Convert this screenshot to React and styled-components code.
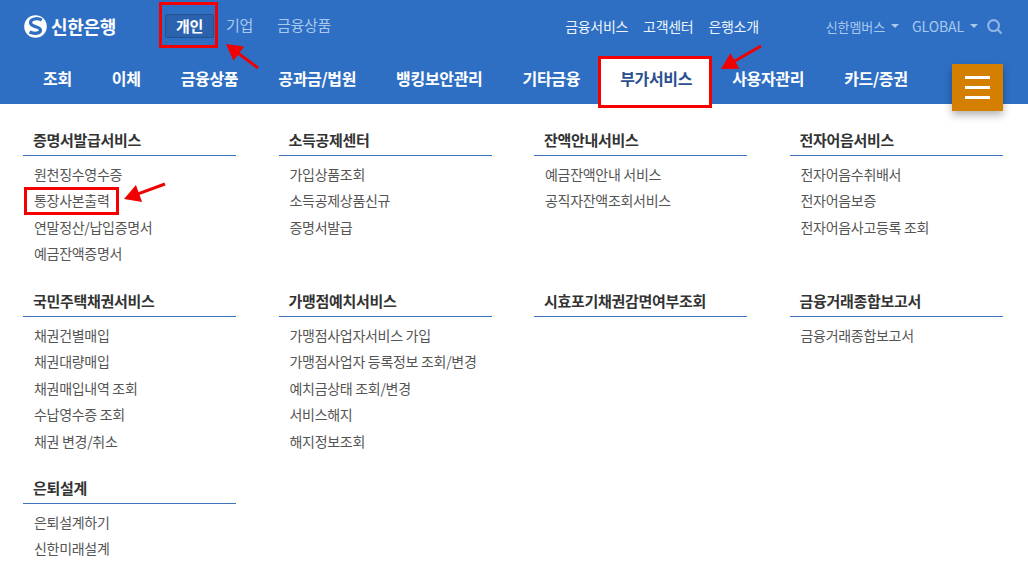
import React from "react";
import styled, { createGlobalStyle } from "styled-components";

const FONT = `"Noto Sans CJK KR", "Noto Sans", sans-serif`;

const GlobalStyle = createGlobalStyle`
  html, body {
    margin: 0;
    padding: 0;
    background: #fff;
    font-family: ${FONT};
  }
`;

const Page = styled.div`
  position: relative;
  width: 1028px;
  height: 579px;
  overflow: hidden;
`;

const Header = styled.header`
  height: 104px;
  background: #2e6fc4;
  display: flex;
  flex-direction: column;
`;

const TopBar = styled.div`
  height: 52px;
  display: flex;
  align-items: center;
  padding: 0 26px 0 24px;
`;

const Logo = styled.div`
  display: flex;
  align-items: center;
  gap: 4px;
  width: 141px;
  color: #fff;
  font-size: 18px;
  font-weight: 700;
  letter-spacing: -0.3px;
`;

const Segments = styled.nav`
  display: flex;
  align-items: center;
`;

const Segment = styled.a`
  height: 24px;
  line-height: 22px;
  font-size: 15px;
  text-align: center;
  box-sizing: border-box;
  letter-spacing: -0.3px;
  padding: 0 ${(p) => (p.$active ? "10px" : "12px")};
  color: ${(p) => (p.$active ? "#fff" : "#a9c8ee")};
  font-weight: ${(p) => (p.$active ? 700 : 400)};
  background: ${(p) => (p.$active ? "#2b62ae" : "transparent")};
  border: ${(p) => (p.$active ? "1px solid #24528f" : "0")};
  border-radius: 2px;
`;

const Utility = styled.div`
  margin-left: auto;
  display: flex;
  align-items: center;
  gap: 15px;
  margin-right: 67px;
`;

const UtilityLink = styled.a`
  color: #eef4fc;
  font-size: 14px;
  letter-spacing: -0.3px;
`;

const Extra = styled.div`
  display: flex;
  align-items: center;
  gap: 9px;
`;

const ExtraLink = styled.a`
  display: flex;
  align-items: center;
  gap: 6px;
  margin-right: ${(p) => (p.$latin ? "0" : "4px")};
  color: #a9c8ee;
  font-size: ${(p) => (p.$latin ? "14px" : "13px")};
  letter-spacing: -0.1px;
  &::after {
    content: "";
    border: 4px solid transparent;
    border-top: 4px solid #a9c8ee;
    border-bottom: 0;
  }
`;

const MainNav = styled.nav`
  flex: 1;
  display: flex;
  align-items: stretch;
  padding-left: 23px;
`;

const Tab = styled.a`
  margin-top: 6px;
  padding: 8px 20px 0;
  font-size: 16px;
  font-weight: 700;
  letter-spacing: -0.32px;
  color: ${(p) => (p.$active ? "#2c4f8f" : "#fff")};
  background: ${(p) => (p.$active ? "#fff" : "transparent")};
`;

const Burger = styled.button`
  position: absolute;
  left: 952px;
  top: 64px;
  width: 51px;
  height: 47px;
  padding: 0;
  border: 0;
  background: #d57f00;
  box-shadow: 0 4px 8px rgba(0, 0, 0, 0.3);
  display: flex;
  flex-direction: column;
  align-items: center;
  justify-content: center;
  gap: 7px;
  span {
    width: 25px;
    height: 3px;
    background: #fff;
  }
`;

const Sitemap = styled.main`
  display: grid;
  grid-template-columns: repeat(4, 213px);
  column-gap: 42.5px;
  grid-template-rows: 161px 187px auto;
  padding: 24px 0 0 23px;
`;

const Group = styled.section``;

const GroupTitle = styled.h3`
  margin: 0;
  height: 27px;
  line-height: 24px;
  padding-left: 10px;
  font-size: 15px;
  font-weight: 700;
  letter-spacing: -0.3px;
  color: #333;
  border-bottom: 1px solid #3d75bd;
`;

const Items = styled.ul`
  list-style: none;
  margin: 5px 0 0;
  padding: 0 0 0 11px;
`;

const Item = styled.li`
  height: 26.4px;
  line-height: 26px;
  font-size: 14px;
  letter-spacing: -0.3px;
  color: #555;
  white-space: nowrap;
`;

const Mark = styled.div`
  position: absolute;
  box-sizing: border-box;
  left: ${(p) => p.$x}px;
  top: ${(p) => p.$y}px;
  width: ${(p) => p.$w}px;
  height: ${(p) => p.$h}px;
  border: 3px solid #f40000;
`;

const Overlay = styled.svg`
  position: absolute;
  left: 0;
  top: 0;
  pointer-events: none;
`;

const GROUPS = [
  ["증명서발급서비스", ["원천징수영수증", "통장사본출력", "연말정산/납입증명서", "예금잔액증명서"]],
  ["소득공제센터", ["가입상품조회", "소득공제상품신규", "증명서발급"]],
  ["잔액안내서비스", ["예금잔액안내 서비스", "공직자잔액조회서비스"]],
  ["전자어음서비스", ["전자어음수취배서", "전자어음보증", "전자어음사고등록 조회"]],
  ["국민주택채권서비스", ["채권건별매입", "채권대량매입", "채권매입내역 조회", "수납영수증 조회", "채권 변경/취소"]],
  ["가맹점예치서비스", ["가맹점사업자서비스 가입", "가맹점사업자 등록정보 조회/변경", "예치금상태 조회/변경", "서비스해지", "해지정보조회"]],
  ["시효포기채권감면여부조회", []],
  ["금융거래종합보고서", ["금융거래종합보고서"]],
  ["은퇴설계", ["은퇴설계하기", "신한미래설계"]],
];

const TABS = ["조회", "이체", "금융상품", "공과금/법원", "뱅킹보안관리", "기타금융", "부가서비스", "사용자관리", "카드/증권"];

const Arrow = ({ x1, y1, x2, y2 }) => {
  const a = Math.atan2(y2 - y1, x2 - x1);
  const pt = (d, o) => [
    x2 - d * Math.cos(a) - o * Math.sin(a),
    y2 - d * Math.sin(a) + o * Math.cos(a),
  ];
  const head = [[x2, y2], pt(16, 9), pt(16, -9)].map((p) => p.join(",")).join(" ");
  const [lx, ly] = pt(12, 0);
  return (
    <g>
      <line x1={x1} y1={y1} x2={lx} y2={ly} stroke="#f00000" strokeWidth="3" />
      <polygon points={head} fill="#f00000" />
    </g>
  );
};

export default function App() {
  return (
    <Page>
      <GlobalStyle />
      <Header>
        <TopBar>
          <Logo>
            <svg width="23" height="23" viewBox="0 0 24 24">
              <circle cx="12" cy="12" r="11.8" fill="#fff" />
              <path
                d="M18.5 5.4C14 2.6 6.6 4 6.8 8.2c.2 4.6 10.4 3.6 10.4 7.6 0 3.2-6.2 4.4-11.4 2"
                fill="none"
                stroke="#2e6fc4"
                strokeWidth="3.4"
              />
            </svg>
            신한은행
          </Logo>
          <Segments>
            <Segment $active>개인</Segment>
            <Segment>기업</Segment>
            <Segment>금융상품</Segment>
          </Segments>
          <Utility>
            <UtilityLink>금융서비스</UtilityLink>
            <UtilityLink>고객센터</UtilityLink>
            <UtilityLink>은행소개</UtilityLink>
          </Utility>
          <Extra>
            <ExtraLink>신한멤버스</ExtraLink>
            <ExtraLink $latin>GLOBAL</ExtraLink>
            <svg width="15" height="15" viewBox="0.5 0.5 16 16" fill="none" stroke="#8fb6e6" strokeWidth="2.3">
              <circle cx="7.5" cy="7.5" r="5.8" />
              <line x1="11.8" y1="11.8" x2="16" y2="16" />
            </svg>
          </Extra>
        </TopBar>
        <MainNav>
          {TABS.map((label) => (
            <Tab key={label} $active={label === "부가서비스"}>
              {label}
            </Tab>
          ))}
        </MainNav>
      </Header>
      <Burger>
        <span />
        <span />
        <span />
      </Burger>
      <Sitemap>
        {GROUPS.map(([title, items]) => (
          <Group key={title}>
            <GroupTitle>{title}</GroupTitle>
            <Items>
              {items.map((item) => (
                <Item key={item}>{item}</Item>
              ))}
            </Items>
          </Group>
        ))}
      </Sitemap>
      <Mark $x={159} $y={2} $w={59} $h={46} />
      <Mark $x={598} $y={56} $w={114} $h={52} />
      <Mark $x={24} $y={187} $w={95} $h={28} />
      <Overlay width="1028" height="579">
        <Arrow x1={258} y1={68} x2={226} y2={44} />
        <Arrow x1={761} y1={46} x2={721} y2={69} />
        <Arrow x1={165} y1={184} x2={124} y2={199} />
      </Overlay>
    </Page>
  );
}
